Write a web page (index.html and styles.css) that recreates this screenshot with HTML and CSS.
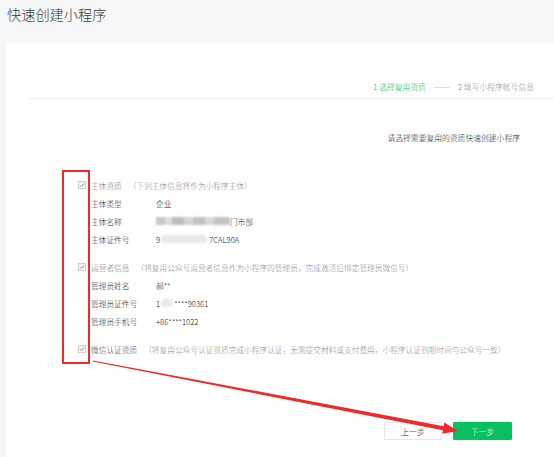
FILE: index.html
```html
<!DOCTYPE html>
<html lang="zh">
<head>
<meta charset="utf-8">
<link rel="stylesheet" href="styles.css">
</head>
<body>
<div class="title">快速创建小程序</div>
<div class="card">
  <div class="steps">
    <span class="step active">1 选择复用资质</span>
    <span class="step-line"></span>
    <span class="step">2 填写小程序帐号信息</span>
  </div>
  <div class="divider"></div>
  <div class="subtitle">请选择需要复用的资质快速创建小程序</div>

  <div class="sections">
    <div class="section">
      <div class="sec-head"><span class="cb"><svg viewBox="0 0 8 8" width="8" height="8"><polyline points="2,4.2 3.4,5.6 6,2.6" fill="none" stroke="#888" stroke-width="0.9"/></svg></span><span class="sec-label">主体资质</span><span class="sec-note">（下列主体信息将作为小程序主体）</span></div>
      <div class="row"><span class="lbl">主体类型</span><span class="val">企业</span></div>
      <div class="row"><span class="lbl">主体名称</span><span class="val"><span class="blur blur-dark"></span>门市部</span></div>
      <div class="row"><span class="lbl">主体证件号</span><span class="val">9<span class="blur blur-light w46"></span>7CAL90A</span></div>
    </div>
    <div class="section">
      <div class="sec-head"><span class="cb"><svg viewBox="0 0 8 8" width="8" height="8"><polyline points="2,4.2 3.4,5.6 6,2.6" fill="none" stroke="#888" stroke-width="0.9"/></svg></span><span class="sec-label">运营者信息</span><span class="sec-note">（将复用公众号运营者信息作为小程序的管理员，完成激活后绑定管理员微信号）</span></div>
      <div class="row"><span class="lbl">管理员姓名</span><span class="val">郝**</span></div>
      <div class="row"><span class="lbl">管理员证件号</span><span class="val">1<span class="blur blur-light w12"></span>****90361</span></div>
      <div class="row"><span class="lbl">管理员手机号</span><span class="val">+86****1022</span></div>
    </div>
    <div class="section">
      <div class="sec-head"><span class="cb"><svg viewBox="0 0 8 8" width="8" height="8"><polyline points="2,4.2 3.4,5.6 6,2.6" fill="none" stroke="#888" stroke-width="0.9"/></svg></span><span class="sec-label dark">微信认证资质</span><span class="sec-note">（将复用公众号认证资质完成小程序认证，无需提交材料或支付费用，小程序认证到期时间与公众号一致）</span></div>
    </div>
  </div>

  <div class="actions">
    <button class="btn btn-default">上一步</button>
    <button class="btn btn-primary">下一步</button>
  </div>
</div>

<div class="mark-box"></div>
<svg class="mark-arrow" width="554" height="457" viewBox="0 0 554 457">
  <polygon points="93.1,360.4 443.7,426.2 444.3,422.6 458,431 442.3,433.8 442.9,430.2 92.9,361.6" fill="#ee2a2a"/>
</svg>
</body>
</html>
```
FILE: styles.css
```css
html, body {
  margin: 0;
  padding: 0;
}
body {
  background: #f6f7f9;
  font-family: "Noto Sans CJK SC", "Noto Sans", sans-serif;
  font-weight: 300;
  color: #222;
  width: 554px;
  height: 457px;
  overflow: hidden;
  position: relative;
}
.title {
  height: 42px;
  box-sizing: border-box;
  padding: 3px 0 0 7px;
  font-size: 14.2px;
  line-height: 22px;
  color: #353535;
}
.card {
  margin-left: 6px;
  background: #fff;
  height: 415px;
}
.steps {
  display: flex;
  justify-content: flex-end;
  align-items: center;
  padding: 34px 20px 0 0;
  height: 56px;
  box-sizing: border-box;
  font-size: 7.8px;
  line-height: 12px;
}
.step {
  color: #8c8c8c;
}
.step.active {
  color: #07c160;
}
.step-line {
  width: 16px;
  height: 1px;
  background: #dcdcdc;
  margin: 0 8px;
}
.divider {
  margin-left: 22px;
  border-bottom: 1px solid #f0f0f0;
}
.subtitle {
  margin-top: 30px;
  text-align: right;
  padding-right: 34px;
  font-size: 7.8px;
  line-height: 18px;
  color: #222;
}
.sections {
  margin-top: 29px;
  padding-left: 72px;
  display: flex;
  flex-direction: column;
  gap: 10px;
}
.section {
  display: flex;
  flex-direction: column;
}
.sec-head, .row {
  display: flex;
  align-items: center;
  height: 18px;
  font-size: 7.7px;
  white-space: nowrap;
}
.cb {
  width: 8px;
  height: 8px;
  box-sizing: border-box;
  border: 1px solid #cfcfcf;
  background: #f5f5f5;
  display: flex;
  align-items: center;
  justify-content: center;
  margin-right: 5px;
}
.cb svg {
  display: block;
  flex: none;
}
.sec-label {
  color: #7a7a7a;
}
.sec-label.dark {
  color: #444;
}
.sec-note {
  color: #8e8e8e;
  margin-left: 7px;
}
.row {
  padding-left: 13px;
}
.lbl {
  width: 65px;
  color: #222;
}
.val {
  color: #222;
  display: flex;
  align-items: center;
}
.blur {
  display: inline-block;
  height: 8px;
  filter: blur(1.2px);
}
.blur-dark {
  width: 74px;
  background: linear-gradient(90deg, #c8c8c8 0 12%, #dcdcdc 12% 22%, #bdbdbd 22% 38%, #d6d6d6 38% 50%, #c2c2c2 50% 66%, #dadada 66% 78%, #c4c4c4 78% 100%);
}
.blur-light {
  background: #e9e9e9;
  border-radius: 4px;
}
.w46 { width: 46px; margin: 0 2px 0 1px; }
.w12 { width: 12px; margin: 0 1px 0 1px; }
.actions {
  display: flex;
  justify-content: flex-end;
  gap: 11px;
  padding-right: 42px;
  margin-top: 64px;
}
.btn {
  height: 18px;
  width: 58px;
  padding: 0;
  font-family: "Noto Sans CJK SC", "Noto Sans", sans-serif;
  font-weight: 300;
  font-size: 7.8px;
  border-radius: 1px;
  cursor: pointer;
}
.btn-default {
  background: #fff;
  border: 1px solid #e6e6e6;
  color: #222;
}
.btn-primary {
  width: 59px;
  background: #07c160;
  border: 1px solid #07c160;
  color: #fff;
}
.mark-box {
  position: absolute;
  left: 62px;
  top: 170px;
  width: 28px;
  height: 194px;
  box-sizing: border-box;
  border: 2px solid #ee2a2a;
}
.mark-arrow {
  position: absolute;
  left: 0;
  top: 0;
  pointer-events: none;
}
```
